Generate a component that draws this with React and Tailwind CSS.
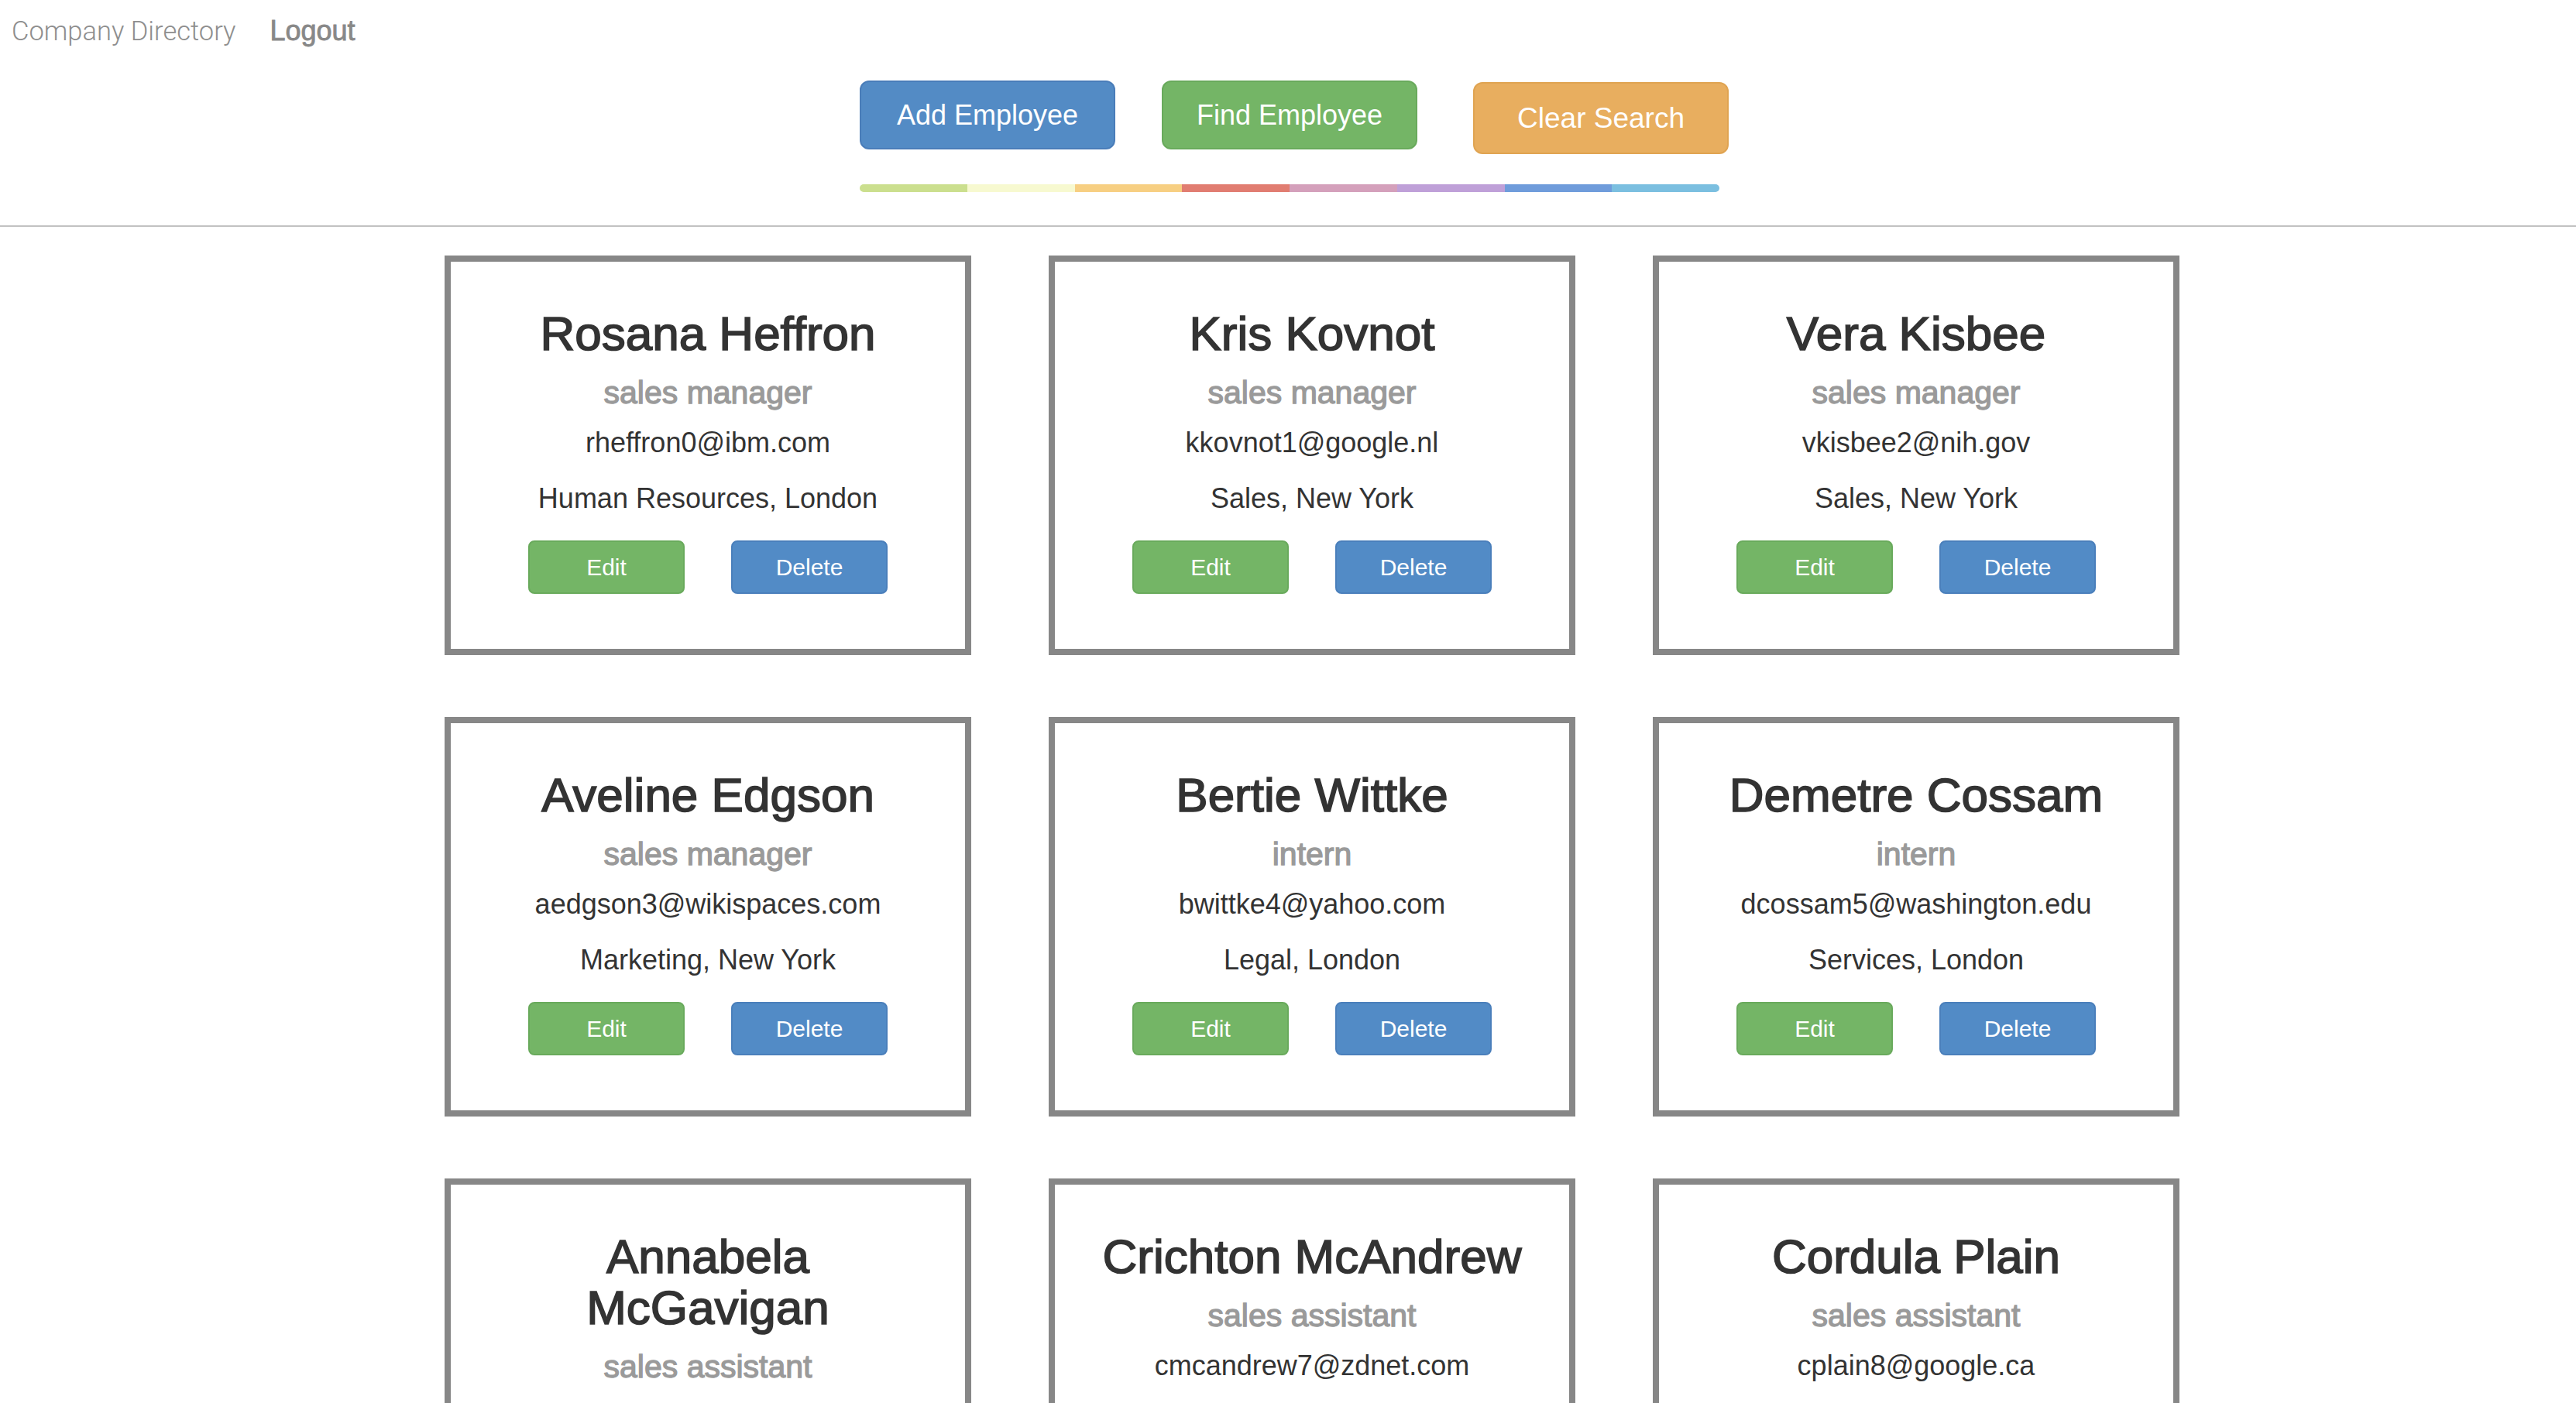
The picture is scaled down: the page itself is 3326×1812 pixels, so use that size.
import React from "react";

const people = [
  { name: "Rosana Heffron", role: "sales manager", email: "rheffron0@ibm.com", loc: "Human Resources, London" },
  { name: "Kris Kovnot", role: "sales manager", email: "kkovnot1@google.nl", loc: "Sales, New York" },
  { name: "Vera Kisbee", role: "sales manager", email: "vkisbee2@nih.gov", loc: "Sales, New York" },
  { name: "Aveline Edgson", role: "sales manager", email: "aedgson3@wikispaces.com", loc: "Marketing, New York" },
  { name: "Bertie Wittke", role: "intern", email: "bwittke4@yahoo.com", loc: "Legal, London" },
  { name: "Demetre Cossam", role: "intern", email: "dcossam5@washington.edu", loc: "Services, London" },
  { name: "Annabela McGavigan", role: "sales assistant", email: "amcgavigan6@bbc.co.uk", loc: "Sales, London" },
  { name: "Crichton McAndrew", role: "sales assistant", email: "cmcandrew7@zdnet.com", loc: "Sales, New York" },
  { name: "Cordula Plain", role: "sales assistant", email: "cplain8@google.ca", loc: "Marketing, London" },
];

function Card({ p }) {
  return (
    <div className="w-[680px] border-[8px] border-[#878787] bg-white px-[48px] pt-[60px] pb-[71px] text-center">
      <h2 className="text-[62px] leading-[66px] text-[#333333] [-webkit-text-stroke:1.6px_#333333]">{p.name}</h2>
      <div className="mt-[21px] text-[41px] leading-[44px] text-[#9a9a9a] [-webkit-text-stroke:1.3px_#9a9a9a]">{p.role}</div>
      <div className="mt-[23px] text-[36px] leading-[40px] text-[#333333]">{p.email}</div>
      <div className="mt-[32px] text-[36px] leading-[40px] text-[#333333]">{p.loc}</div>
      <div className="mt-[34px] flex justify-center gap-[60px]">
        <button className="flex h-[69px] w-[202px] items-center justify-center rounded-[8px] border-2 border-[#69aa5c] bg-[#74b566] text-[30px] text-white">
          Edit
        </button>
        <button className="flex h-[69px] w-[202px] items-center justify-center rounded-[8px] border-2 border-[#4a7fbb] bg-[#528bc6] text-[30px] text-white">
          Delete
        </button>
      </div>
    </div>
  );
}

const stripes = ["bg-[#cbdf8e]", "bg-[#f7f9d0]", "bg-[#f7cf82]", "bg-[#e17d71]", "bg-[#d4a0bb]", "bg-[#bfa0d8]", "bg-[#6f9cdb]", "bg-[#7bbfe0]"];

export default function App() {
  return (
    <div className="min-h-screen bg-white font-['Liberation_Sans',Arial,sans-serif]">
      <nav className="flex items-center pt-[20px]">
        <span className="ml-[15px] font-['Roboto','Liberation_Sans',sans-serif] text-[34.5px] font-light leading-[40px] text-[#8e8e8e]">
          Company Directory
        </span>
        <span className="ml-[44px] text-[36px] leading-[40px] text-[#888888] [-webkit-text-stroke:0.8px_#888888]">Logout</span>
      </nav>

      <div className="ml-[1110px] mt-[44px] w-[1122px]">
        <div className="flex items-start">
          <button className="flex h-[89px] w-[330px] items-center justify-center rounded-[12px] border-2 border-[#4a7db9] bg-[#538bc5] text-[36px] text-white">
            Add Employee
          </button>
          <button className="ml-[60px] flex h-[89px] w-[330px] items-center justify-center rounded-[12px] border-2 border-[#69aa5c] bg-[#74b566] text-[36px] text-white">
            Find Employee
          </button>
          <button className="ml-[72px] mt-[2px] flex h-[93px] w-[330px] items-center justify-center rounded-[12px] border-2 border-[#e0a452] bg-[#e8ae5f] text-[37px] text-white">
            Clear Search
          </button>
        </div>
        <div className="mt-[39px] flex h-[10px] w-[1110px] overflow-hidden rounded-[5px]">
          {stripes.map((c, i) => (
            <div key={i} className={`flex-1 ${c}`} />
          ))}
        </div>
      </div>

      <div className="mt-[43px] border-t-2 border-[#c2c2c2]" />

      <div className="ml-[574px] mt-[37px] grid w-[2240px] grid-cols-[680px_680px_680px] items-start gap-x-[100px] gap-y-[80px] pb-[80px]">
        {people.map((p) => (
          <Card key={p.email} p={p} />
        ))}
      </div>
    </div>
  );
}
